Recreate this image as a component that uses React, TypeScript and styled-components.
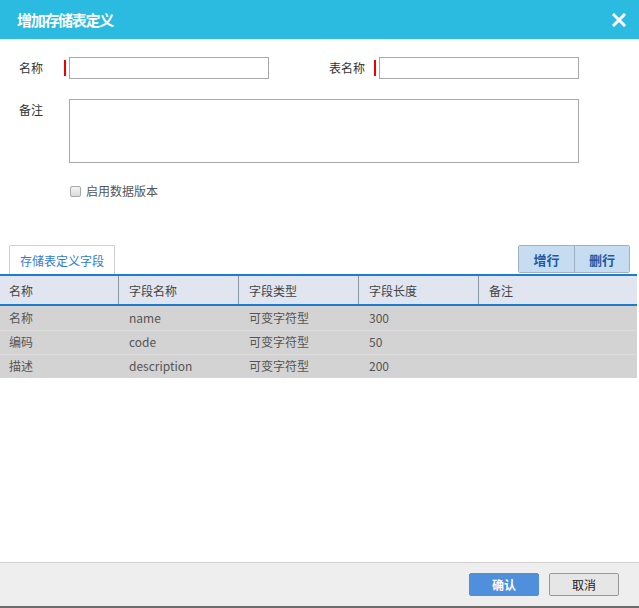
import React from "react";
import styled, { createGlobalStyle } from "styled-components";

const GlobalStyle = createGlobalStyle`
  html, body { margin: 0; padding: 0; background: #ffffff; }
  body {
    font-family: "Noto Sans CJK SC", "Noto Sans", "Liberation Sans", sans-serif;
    font-size: 12px;
    color: #333;
  }
  * { box-sizing: border-box; }
`;

const Dialog = styled.div`
  width: 639px;
  height: 608px;
  display: flex;
  flex-direction: column;
  background: #fff;
  overflow: hidden;
`;

const Header = styled.div`
  height: 39px;
  flex: none;
  background: #2cbbe0;
  display: flex;
  align-items: center;
  justify-content: space-between;
  padding: 0 13px 0 17px;
`;

const Title = styled.h1`
  margin: 0;
  font-size: 15px;
  font-weight: 700;
  letter-spacing: -1.3px;
  color: #fff;
  line-height: 1;
`;

const CloseButton = styled.button`
  border: none;
  background: transparent;
  padding: 0;
  width: 14px;
  height: 14px;
  display: flex;
  cursor: pointer;
`;

const Body = styled.div`
  flex: 1;
  display: flex;
  flex-direction: column;
  min-height: 0;
`;

const Form = styled.div`
  padding: 18px 0 0 19px;
  display: flex;
  flex-direction: column;
`;

const FormRow = styled.div<{ $gap?: number }>`
  display: flex;
  align-items: flex-start;
  gap: 60px;
  margin-bottom: ${(p) => p.$gap ?? 0}px;
`;

const Field = styled.div<{ $top?: boolean }>`
  display: flex;
  align-items: ${(p) => (p.$top ? "flex-start" : "center")};
`;

const Label = styled.label<{ $top?: boolean }>`
  width: 45px;
  flex: none;
  font-size: 12px;
  color: #333;
  line-height: 16px;
  padding-top: ${(p) => (p.$top ? 3 : 0)}px;
`;

const Marker = styled.span<{ $required?: boolean }>`
  width: 2px;
  height: 16px;
  margin-right: 3px;
  flex: none;
  background: ${(p) => (p.$required ? "#ee0000" : "transparent")};
`;

const TextInput = styled.input`
  width: 200px;
  height: 22px;
  border: 1px solid #a9a9a9;
  padding: 0 4px;
  font: inherit;
  outline: none;
  background: #fff;
`;

const TextArea = styled.textarea`
  width: 510px;
  height: 64px;
  border: 1px solid #a9a9a9;
  padding: 3px 4px;
  font: inherit;
  resize: none;
  outline: none;
  display: block;
`;

const CheckRow = styled.label`
  display: flex;
  align-items: center;
  gap: 5px;
  margin: 20px 0 0 51px;
  color: #555;
  font-size: 12px;
  line-height: 16px;
`;

const CheckBox = styled.input`
  appearance: none;
  -webkit-appearance: none;
  margin: 0;
  width: 11px;
  height: 11px;
  border: 1px solid #a8a8a8;
  border-radius: 2px;
  background: linear-gradient(#f4f4f4, #dcdcdc);
`;

const TabBar = styled.div`
  margin-top: 46px;
  height: 29px;
  display: flex;
  align-items: flex-end;
  justify-content: space-between;
  padding: 0 9px;
`;

const Tab = styled.div`
  height: 29px;
  width: 106px;
  border: 1px solid #cfcfcf;
  border-bottom: none;
  border-radius: 2px 2px 0 0;
  background: #fff;
  color: #2f7ad8;
  font-size: 12px;
  display: flex;
  align-items: center;
  justify-content: center;
`;

const ButtonGroup = styled.div`
  display: flex;
  align-self: flex-start;
  height: 28px;
  border: 1px solid #9fb0c2;
  border-radius: 2px;
  overflow: hidden;
`;

const GroupButton = styled.button`
  width: 55px;
  height: 100%;
  border: none;
  background: #c5dcf1;
  color: #1d5aa6;
  font: inherit;
  font-size: 13px;
  font-weight: 700;
  padding: 0;
  cursor: pointer;
  & + & { border-left: 1px solid #9fb0c2; }
`;

const Table = styled.div`
  width: 637px;
  display: flex;
  flex-direction: column;
`;

const cols = "119px 120px 120px 120px 1fr";

const HeadRow = styled.div`
  display: grid;
  grid-template-columns: ${cols};
  height: 32px;
  background: #e0e5ef;
  border-top: 2px solid #1b7dcf;
  border-bottom: 2px solid #1b7dcf;
`;

const HeadCell = styled.div`
  padding-left: 10px;
  display: flex;
  align-items: center;
  color: #444;
  font-size: 12px;
  border-right: 1px solid #8a96a4;
  &:first-child { padding-left: 9px; }
  &:last-child { border-right: none; }
`;

const DataRow = styled.div`
  display: grid;
  grid-template-columns: ${cols};
  height: 24px;
  background: #d3d3d3;
  & + & { border-top: 1px solid #dddddd; }
`;

const DataCell = styled.div`
  padding: 0 0 2px 10px;
  display: flex;
  align-items: center;
  color: #555;
  font-size: 12px;
  &:first-child { padding-left: 9px; }
`;

const Footer = styled.div`
  height: 46px;
  flex: none;
  background: #eeeeee;
  border-top: 1px solid #d0d0d0;
  border-bottom: 2px solid #6b6b6b;
  display: flex;
  align-items: center;
  justify-content: flex-end;
  gap: 10px;
  padding-right: 20px;
`;

const FooterButton = styled.button<{ $primary?: boolean }>`
  width: 70px;
  height: 23px;
  border-radius: 2px;
  font: inherit;
  font-size: 12px;
  padding: 0;
  cursor: pointer;
  border: 1px solid ${(p) => (p.$primary ? "#4f8fdc" : "#9a9a9a")};
  background: ${(p) => (p.$primary ? "#4f8fdc" : "#e6e6e6")};
  color: ${(p) => (p.$primary ? "#fff" : "#222")};
  font-weight: ${(p) => (p.$primary ? 700 : 400)};
`;

const headers = ["名称", "字段名称", "字段类型", "字段长度", "备注"];
const rows = [
  ["名称", "name", "可变字符型", "300", ""],
  ["编码", "code", "可变字符型", "50", ""],
  ["描述", "description", "可变字符型", "200", ""],
];

export default function App() {
  return (
    <>
      <GlobalStyle />
      <Dialog>
        <Header>
          <Title>增加存储表定义</Title>
          <CloseButton aria-label="close">
            <svg width="14" height="14" viewBox="0 0 14 14">
              <path d="M2 2 L12 12 M12 2 L2 12" stroke="#fff" strokeWidth="3" strokeLinecap="square" />
            </svg>
          </CloseButton>
        </Header>
        <Body>
          <Form>
            <FormRow $gap={20}>
              <Field>
                <Label>名称</Label>
                <Marker $required />
                <TextInput />
              </Field>
              <Field>
                <Label>表名称</Label>
                <Marker $required />
                <TextInput />
              </Field>
            </FormRow>
            <FormRow>
              <Field $top>
                <Label $top>备注</Label>
                <Marker />
                <TextArea />
              </Field>
            </FormRow>
            <CheckRow>
              <CheckBox type="checkbox" />
              启用数据版本
            </CheckRow>
          </Form>
          <TabBar>
            <Tab>存储表定义字段</Tab>
            <ButtonGroup>
              <GroupButton>增行</GroupButton>
              <GroupButton>删行</GroupButton>
            </ButtonGroup>
          </TabBar>
          <Table>
            <HeadRow>
              {headers.map((h) => (
                <HeadCell key={h}>{h}</HeadCell>
              ))}
            </HeadRow>
            {rows.map((r) => (
              <DataRow key={r[1]}>
                {r.map((c, i) => (
                  <DataCell key={i}>{c}</DataCell>
                ))}
              </DataRow>
            ))}
          </Table>
        </Body>
        <Footer>
          <FooterButton $primary>确认</FooterButton>
          <FooterButton>取消</FooterButton>
        </Footer>
      </Dialog>
    </>
  );
}
